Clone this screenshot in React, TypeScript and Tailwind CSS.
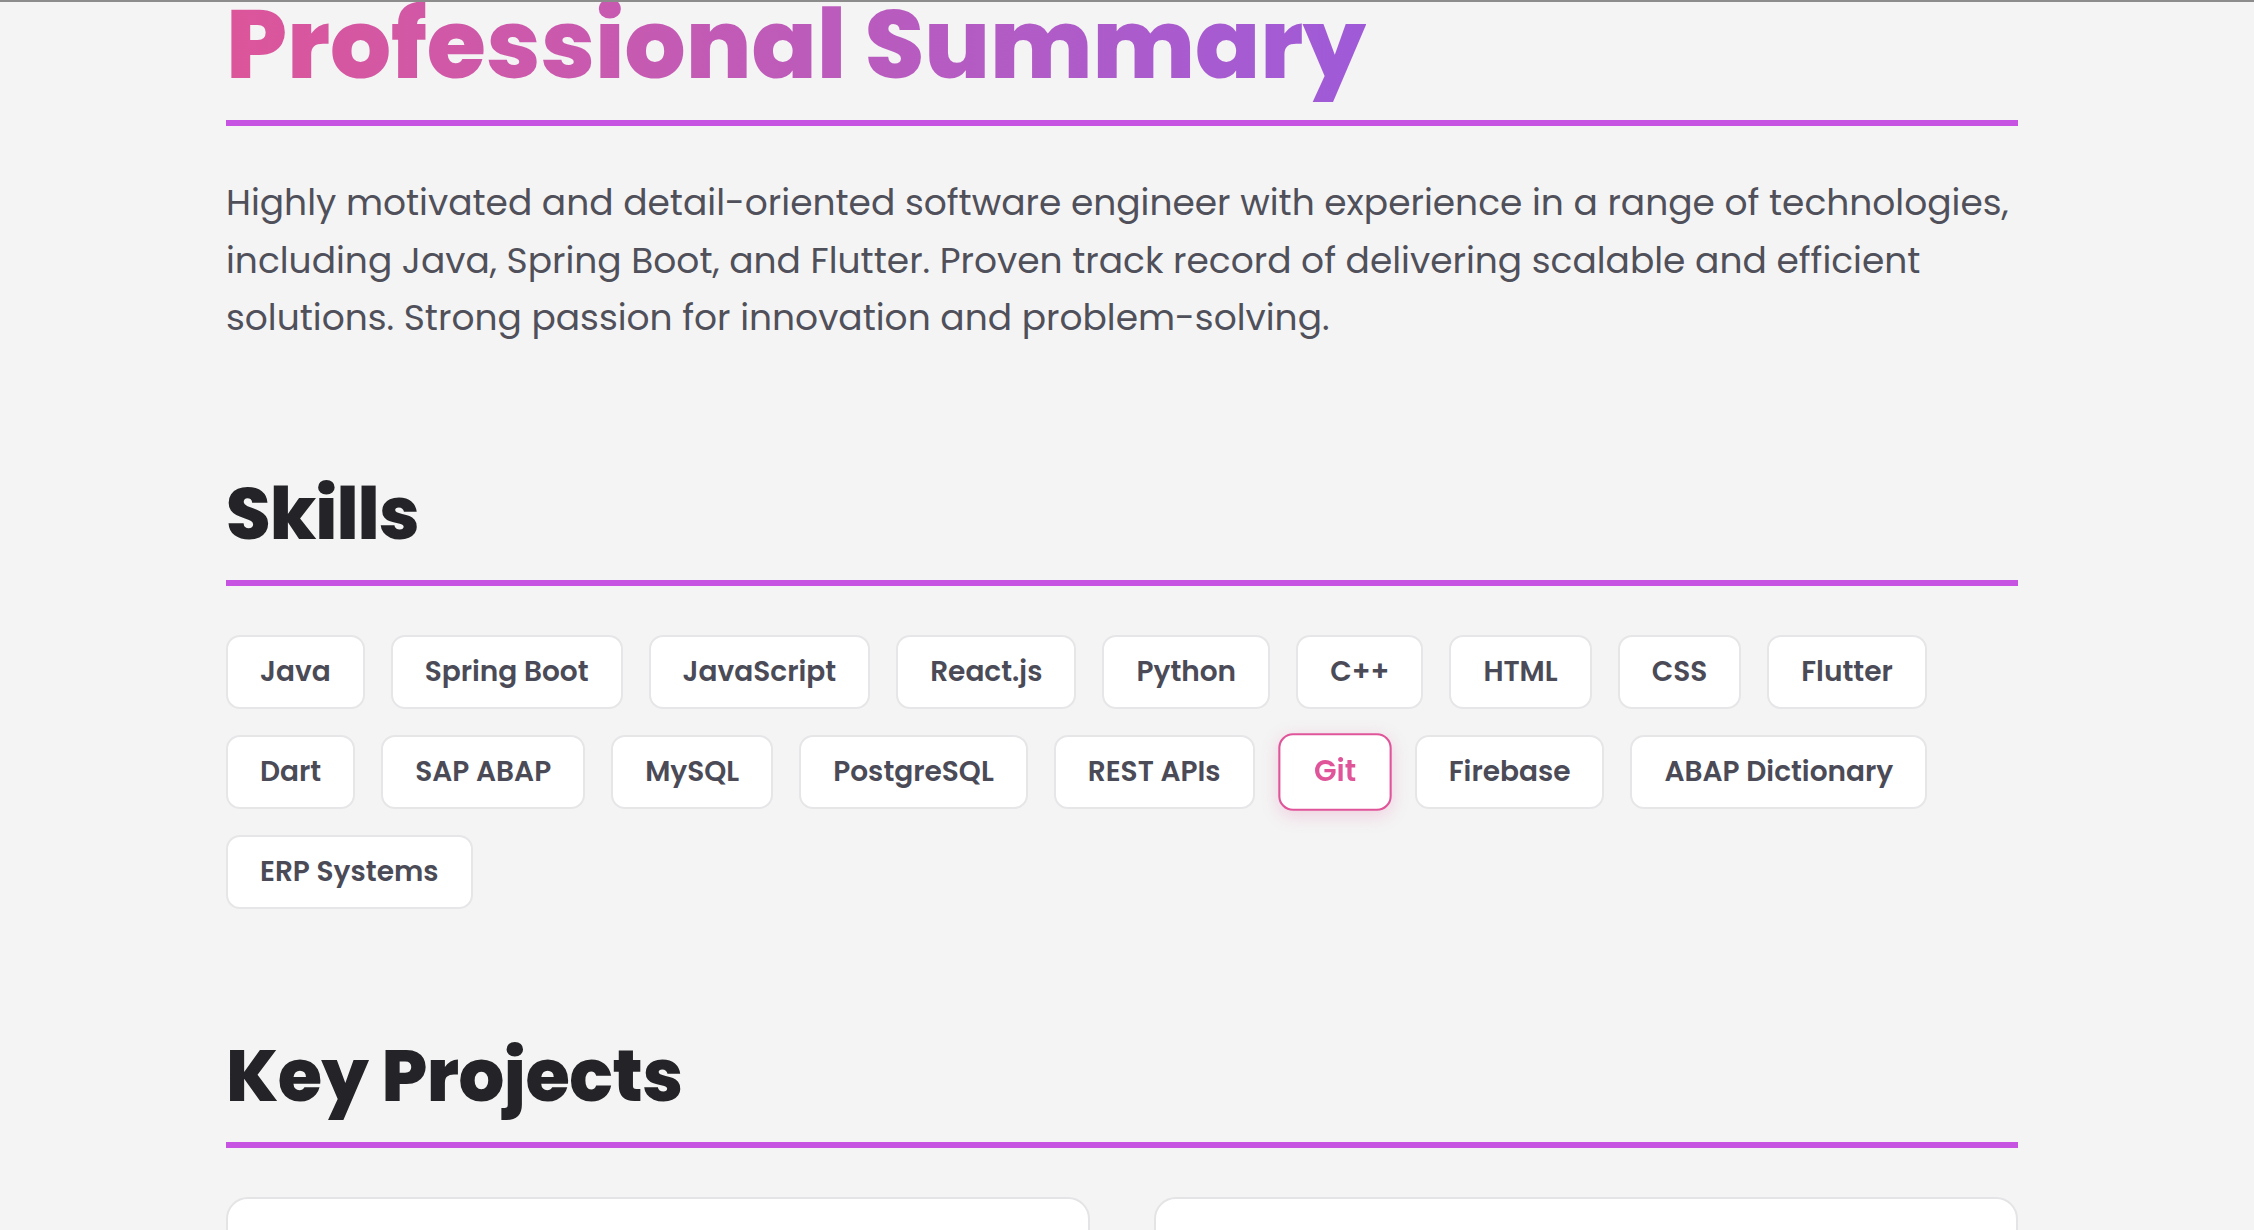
import React from "react";

const skills = [
  "Java",
  "Spring Boot",
  "JavaScript",
  "React.js",
  "Python",
  "C++",
  "HTML",
  "CSS",
  "Flutter",
  "Dart",
  "SAP ABAP",
  "MySQL",
  "PostgreSQL",
  "REST APIs",
  "Git",
  "Firebase",
  "ABAP Dictionary",
  "ERP Systems",
];

const font = { fontFamily: "Poppins, Inter, 'Noto Sans', sans-serif" };

function SectionHeading({ children, tight }: { children: React.ReactNode; tight?: boolean }) {
  return (
    <h2
      className={
        tight
          ? "text-[72px] leading-[1.2] font-extrabold text-[#242428] tracking-[-1px] pb-[23px] border-b-[6px] border-[#c653e2]"
          : "text-[72px] leading-[1.2] font-extrabold text-[#242428] tracking-[-0.5px] pb-[23px] border-b-[6px] border-[#c653e2]"
      }
    >
      {children}
    </h2>
  );
}

export default function App() {
  return (
    <div
      className="min-h-screen bg-[#f4f4f4] border-t-2 border-[#8c8c8c] overflow-hidden"
      style={font}
    >
      <main className="pl-[226px] pr-[236px]">
        <section>
          <h1 className="-mt-[15px] pb-[18px] border-b-[6px] border-[#c653e2] text-[96px] leading-[1.2] font-extrabold">
            <span className="inline-block bg-gradient-to-r from-[#dc559a] to-[#9f5ad8] bg-clip-text text-transparent">
              Professional Summary
            </span>
          </h1>
          <p className="mt-[48px] text-[36px] leading-[57.5px] text-[#50505a]">
            Highly motivated and detail-oriented software engineer with experience in a range of technologies,
            <br />
            including Java, Spring Boot, and Flutter. Proven track record of delivering scalable and efficient
            <br />
            solutions. Strong passion for innovation and problem-solving.
          </p>
        </section>

        <section className="mt-[124px]">
          <SectionHeading tight>Skills</SectionHeading>
          <div className="mt-[49px] flex flex-wrap gap-[26px]">
            {skills.map((s) =>
              s === "Git" ? (
                <span
                  key={s}
                  className="scale-105 px-[32px] py-[14px] text-[28px] leading-[42px] font-semibold rounded-[14px] bg-white border-2 border-[#e0559a] text-[#e0559a] shadow-[0_4px_16px_rgba(224,85,154,0.22)]"
                >
                  {s}
                </span>
              ) : (
                <span
                  key={s}
                  className="px-[32px] py-[14px] text-[28px] leading-[42px] font-semibold rounded-[14px] bg-white border-2 border-[#e6e6e8] text-[#4b4b57]"
                >
                  {s}
                </span>
              )
            )}
          </div>
        </section>

        <section className="mt-[124px]">
          <SectionHeading>Key Projects</SectionHeading>
          <div className="mt-[49px] grid grid-cols-2 gap-[64px]">
            <div className="h-[400px] bg-white border-2 border-[#e4e4e6] rounded-[22px]" />
            <div className="h-[400px] bg-white border-2 border-[#e4e4e6] rounded-[22px]" />
          </div>
        </section>
      </main>
    </div>
  );
}
